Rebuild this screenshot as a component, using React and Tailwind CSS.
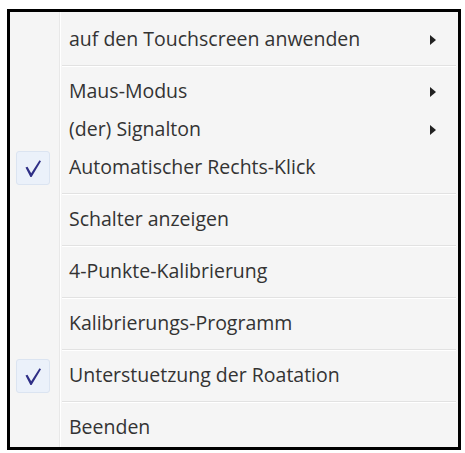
import React from "react";

const font = { fontFamily: '"Open Sans", "Noto Sans", sans-serif' };

function Check() {
  return (
    <div className="ml-[6px] w-[34px] h-[34px] rounded-[3px] border border-[#dbe4f1] bg-[#ebf1fa] flex items-center justify-center">
      <svg width="18" height="19" viewBox="0 0 18 19">
        <path d="M1.5 8.5 L3.5 7.8 L7.2 14.2 L15.5 1.2 L17 2.2 L7.6 18 L6.4 18 Z" fill="#2f2f86" />
      </svg>
    </div>
  );
}

function Arrow() {
  return (
    <svg width="6" height="10" viewBox="0 0 6 10" className="mr-[22px]">
      <path d="M0 0 L6 5 L0 10 Z" fill="#222" />
    </svg>
  );
}

function Row({ label, checked, sub }) {
  return (
    <div className="flex h-[38px]">
      <div className="w-[50px] shrink-0 border-r border-[#e8e8e8] flex items-center">
        {checked ? <Check /> : null}
      </div>
      <div className="flex-1 border-l border-white flex items-center justify-between pl-[8px]">
        <span className="text-[19.5px] font-medium text-[#333333] -mt-[2px]" style={font}>{label}</span>
        {sub ? <Arrow /> : null}
      </div>
    </div>
  );
}

function Sep() {
  return (
    <div className="flex h-[14px]">
      <div className="w-[50px] shrink-0 border-r border-[#e8e8e8]" />
      <div className="flex-1 border-l border-white flex flex-col justify-center pl-[1px] pr-[2px]">
        <div className="h-px bg-[#e2e2e2]" />
        <div className="h-px bg-white" />
      </div>
    </div>
  );
}

export default function App() {
  return (
    <div className="w-[465px] h-[453px] bg-white pt-[9px] pl-[7px]">
      <div className="w-[454px] h-[441px] border-[3px] border-black bg-[#f5f5f5] flex flex-col overflow-hidden">
        <div className="flex h-[9px]">
          <div className="w-[50px] shrink-0 border-r border-[#e8e8e8]" />
          <div className="flex-1 border-l border-white" />
        </div>
        <Row label="auf den Touchscreen anwenden" sub />
        <Sep />
        <Row label="Maus-Modus" sub />
        <Row label="(der) Signalton" sub />
        <Row label="Automatischer Rechts-Klick" checked />
        <Sep />
        <Row label="Schalter anzeigen" />
        <Sep />
        <Row label="4-Punkte-Kalibrierung" />
        <Sep />
        <Row label="Kalibrierungs-Programm" />
        <Sep />
        <Row label="Unterstuetzung der Roatation" checked />
        <Sep />
        <Row label="Beenden" />
        <div className="flex flex-1">
          <div className="w-[50px] shrink-0 border-r border-[#e8e8e8]" />
          <div className="flex-1 border-l border-white" />
        </div>
      </div>
    </div>
  );
}
